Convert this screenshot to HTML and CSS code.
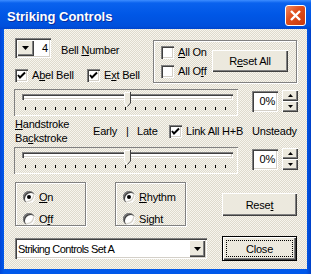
FILE: index.html
```html
<!DOCTYPE html>
<html lang="en">
<head>
  <meta charset="UTF-8" />
  <title>Striking Controls</title>
  <link rel="stylesheet" href="styles.css">
</head>
<body>
  <div class="window">
    <div class="titlebar">
      <span class="title">Striking Controls</span>
      <span class="close-x">
        <svg width="13" height="13" viewBox="0 0 13 13"><path d="M2 2 L11 11 M11 2 L2 11" stroke="#fff" stroke-width="2.4" fill="none"/></svg>
      </span>
    </div>

    <div class="client">
      <!-- bell number + all on/off -->
      <div class="top">
        <div class="top-left">
          <div class="bell-row">
            <div class="mini-combo">
              <span class="mini-btn"><svg width="7" height="4" viewBox="0 0 7 4"><polygon points="0,0 7,0 3.5,4" fill="#000"/></svg></span>
              <span class="mini-val">4</span>
            </div>
            <span class="bell-label">Bell <u>N</u>umber</span>
          </div>
          <div class="check-row">
            <div class="check check-wide">
              <span class="box"><svg width="13" height="13" viewBox="0 0 13 13"><polyline points="3,6 5,8.5 10,3.5" stroke="#000" stroke-width="2" fill="none"/></svg></span>
              A<u>b</u>el Bell
            </div>
            <div class="check">
              <span class="box"><svg width="13" height="13" viewBox="0 0 13 13"><polyline points="3,6 5,8.5 10,3.5" stroke="#000" stroke-width="2" fill="none"/></svg></span>
              E<u>x</u>t Bell
            </div>
          </div>
        </div>
        <div class="group all-group">
          <div class="all-checks">
            <div class="check"><span class="box"></span><u>A</u>ll On</div>
            <div class="check"><span class="box"></span>All O<u>f</u>f</div>
          </div>
          <div class="btn reset-all">R<u>e</u>set All</div>
        </div>
      </div>

      <!-- handstroke slider -->
      <div class="slider-row">
        <div class="slider">
          <div class="channel"></div>
          <div class="ticks"></div>
          <svg class="thumb" width="7" height="15" viewBox="0 0 7 15">
            <polygon points="0.5,0.5 6.5,0.5 6.5,11 3.5,14.5 0.5,11" fill="#ECE9DE"/>
            <polyline points="3,14 0.5,11 0.5,0.5 6,0.5" stroke="#fff" fill="none"/>
            <polyline points="6.5,0 6.5,11 3.5,14.5" stroke="#404040" fill="none"/>
          </svg>
        </div>
        <div class="pct">0%</div>
        <div class="spin">
          <span class="spin-btn"><svg width="5" height="3" viewBox="0 0 5 3"><polygon points="0,3 5,3 2.5,0" fill="#000"/></svg></span>
          <span class="spin-btn"><svg width="5" height="3" viewBox="0 0 5 3"><polygon points="0,0 5,0 2.5,3" fill="#000"/></svg></span>
        </div>
      </div>

      <div class="mid-row">
        <div class="hb">
          <div><u>H</u>andstroke</div>
          <div>Ba<u>c</u>kstroke</div>
        </div>
        <span class="early">Early</span>
        <span class="bar">|</span>
        <span class="late">Late</span>
        <div class="check link-check">
          <span class="box"><svg width="13" height="13" viewBox="0 0 13 13"><polyline points="3,6 5,8.5 10,3.5" stroke="#000" stroke-width="2" fill="none"/></svg></span>
          Link All H+B
        </div>
        <span>Unsteady</span>
      </div>

      <!-- unsteady slider -->
      <div class="slider-row second">
        <div class="slider">
          <div class="channel"></div>
          <div class="ticks"></div>
          <svg class="thumb" width="7" height="15" viewBox="0 0 7 15">
            <polygon points="0.5,0.5 6.5,0.5 6.5,11 3.5,14.5 0.5,11" fill="#ECE9DE"/>
            <polyline points="3,14 0.5,11 0.5,0.5 6,0.5" stroke="#fff" fill="none"/>
            <polyline points="6.5,0 6.5,11 3.5,14.5" stroke="#404040" fill="none"/>
          </svg>
        </div>
        <div class="pct">0%</div>
        <div class="spin">
          <span class="spin-btn"><svg width="5" height="3" viewBox="0 0 5 3"><polygon points="0,3 5,3 2.5,0" fill="#000"/></svg></span>
          <span class="spin-btn"><svg width="5" height="3" viewBox="0 0 5 3"><polygon points="0,0 5,0 2.5,3" fill="#000"/></svg></span>
        </div>
      </div>

      <!-- on/off, rhythm/sight -->
      <div class="radio-row">
        <div class="group radio-group">
          <div class="radio"><span class="dot on"></span><u>O</u>n</div>
          <div class="radio"><span class="dot"></span>O<u>f</u>f</div>
        </div>
        <div class="group radio-group second-group">
          <div class="radio"><span class="dot on"></span><u>R</u>hythm</div>
          <div class="radio"><span class="dot"></span>Sight</div>
        </div>
        <div class="btn reset">Rese<u>t</u></div>
      </div>

      <div class="bottom-row">
        <div class="combo">
          <span class="combo-text">Striking Controls Set A</span>
          <span class="combo-btn"><svg width="7" height="4" viewBox="0 0 7 4"><polygon points="0,0 7,0 3.5,4" fill="#000"/></svg></span>
        </div>
        <div class="btn close"><span class="focus">Close</span></div>
      </div>
    </div>
  </div>
</body>
</html>
```

FILE: styles.css
```css
body {
  margin: 0;
  font-family: "Liberation Sans", Arial, sans-serif;
  font-size: 11px;
  letter-spacing: -0.2px;
  color: #000;
}
.window {
  width: 311px;
  height: 274px;
  display: flex;
  flex-direction: column;
  background: linear-gradient(to right, #0046D8, #0058EA 4px, #0058EA 306px, #0040C8);
}
.titlebar {
  height: 29px;
  flex: none;
  display: flex;
  align-items: center;
  padding: 0 5px 0 7px;
  background: linear-gradient(#3D8DFF 0, #0A62EE 3px, #0057E6 50%, #0050DC 90%, #0046CE 100%);
}
.title {
  flex: 1;
  padding-top: 3px;
  color: #fff;
  font-weight: bold;
  font-size: 13px;
  letter-spacing: 0;
  text-shadow: 1px 1px #0A2E9E;
}
.close-x {
  width: 21px;
  height: 21px;
  box-sizing: border-box;
  border: 1px solid #fff;
  border-radius: 3px;
  background: linear-gradient(135deg, #F08B64, #E0501E 40%, #C8380C);
  display: flex;
  align-items: center;
  justify-content: center;
  margin-top: 2px;
}
.client {
  flex: 1;
  margin: 0 4px 5px;
  padding: 9px 0 0 11px;
  background-color: #ECE9DE;
  background-image: repeating-conic-gradient(#F7F5EE 0 25%, #DEDACD 0 50%);
  background-size: 2px 2px;
}

/* shared 3d bits */
.btn {
  box-sizing: border-box;
  display: flex;
  align-items: center;
  justify-content: center;
  background: #ECE9DE;
  box-shadow: inset 1px 1px #fff, inset -1px -1px #404040, inset -2px -2px #808080;
}
.group {
  box-sizing: border-box;
  border: 1px solid #808080;
  box-shadow: inset 1px 1px #fff, 1px 1px #fff;
}
.check {
  display: flex;
  align-items: center;
  line-height: 13px;
  white-space: nowrap;
}
.box {
  width: 13px;
  height: 13px;
  flex: none;
  box-sizing: border-box;
  margin-right: 4px;
  background: #fff;
  box-shadow: inset 1px 1px #808080, inset 2px 2px #404040, inset -1px -1px #fff, inset -2px -2px #D4D0C8;
}
.box svg {
  display: block;
}

/* top row */
.top {
  display: flex;
  height: 45px;
}
.top-left {
  width: 138px;
}
.bell-row {
  display: flex;
  height: 20px;
}
.mini-combo {
  width: 36px;
  height: 20px;
  box-sizing: border-box;
  padding: 2px;
  display: flex;
  background: #fff;
  box-shadow: inset 1px 1px #808080, inset 2px 2px #404040, inset -1px -1px #fff, inset -2px -2px #D4D0C8;
}
.mini-btn {
  width: 17px;
  height: 16px;
  display: flex;
  align-items: center;
  justify-content: center;
  background: #ECE9DE;
  box-shadow: inset 1px 1px #fff, inset -1px -1px #404040, inset -2px -2px #808080;
}
.mini-val {
  flex: 1;
  text-align: right;
  line-height: 16px;
  padding-right: 1px;
}
.bell-label {
  align-self: flex-end;
  margin: 0 0 1px 10px;
  line-height: 13px;
}
.check-row {
  display: flex;
  margin-top: 11px;
}
.check-wide {
  width: 72px;
}
.all-group {
  width: 144px;
  height: 43px;
  margin-top: 2px;
  padding: 5px 0 0 7px;
  display: flex;
  align-items: flex-start;
}
.all-checks {
  width: 51px;
  display: flex;
  flex-direction: column;
  gap: 6px;
}
.reset-all {
  width: 76px;
  height: 22px;
  margin-top: 4px;
}

/* sliders */
.slider-row {
  display: flex;
  align-items: flex-start;
  margin-top: 6px;
}
.slider-row.second {
  margin-top: 2px;
}
.slider {
  position: relative;
  width: 224px;
  height: 27px;
  margin-left: -1px;
  box-sizing: border-box;
  padding: 5px 5px 0 8px;
  box-shadow: inset 1px 1px #808080, inset -1px -1px #fff;
}
.channel {
  height: 6px;
  background: #fff;
  box-shadow: inset 1px 1px #808080, inset 2px 2px #404040, inset -1px -1px #fff, inset -2px -2px #D4D0C8;
}
.ticks {
  width: 201px;
  height: 3px;
  margin: 7px 0 0 3px;
  background: repeating-linear-gradient(to right, #000 0 1px, transparent 1px 10px);
}
.thumb {
  position: absolute;
  left: 110px;
  top: 3px;
}
.pct {
  width: 26px;
  height: 21px;
  margin: 2px 0 0 14px;
  box-sizing: border-box;
  padding-right: 3px;
  text-align: right;
  line-height: 21px;
  background: #fff;
  box-shadow: inset 1px 1px #808080, inset 2px 2px #404040, inset -1px -1px #fff, inset -2px -2px #D4D0C8;
}
.spin {
  width: 16px;
  height: 22px;
  margin: 1px 0 0 4px;
  display: flex;
  flex-direction: column;
}
.spin-btn {
  flex: 1;
  display: flex;
  align-items: center;
  justify-content: center;
  background: #ECE9DE;
  box-shadow: inset 1px 1px #fff, inset -1px -1px #404040, inset -2px -2px #808080;
}
.spin-btn svg {
  display: block;
}

/* middle labels */
.mid-row {
  display: flex;
  align-items: center;
  height: 28px;
  margin-top: 1px;
  white-space: nowrap;
}
.hb {
  width: 78px;
  line-height: 14px;
}
.early {
  width: 33px;
}
.bar {
  width: 11px;
}
.late {
  width: 32px;
}
.link-check {
  width: 83px;
}

/* radio groups */
.radio-row {
  display: flex;
  align-items: flex-start;
  margin-top: 8px;
}
.radio-group {
  width: 71px;
  height: 44px;
  padding: 8px 0 0 7px;
  display: flex;
  flex-direction: column;
  gap: 10px;
}
.second-group {
  margin-left: 29px;
}
.radio {
  display: flex;
  align-items: center;
  line-height: 12px;
}
.dot {
  width: 12px;
  height: 12px;
  flex: none;
  margin-right: 4px;
  border-radius: 50%;
  background: #fff;
  box-shadow: inset 1px 1px #808080, inset 2px 2px #404040, inset -1px -1px #fff, inset -2px -2px #D4D0C8;
  display: flex;
  align-items: center;
  justify-content: center;
}
.dot.on::after {
  content: "";
  width: 4px;
  height: 4px;
  border-radius: 50%;
  background: #000;
}
.reset {
  width: 75px;
  height: 23px;
  margin: 11px 0 0 36px;
}

/* bottom */
.bottom-row {
  display: flex;
  align-items: center;
  margin-top: 10px;
}
.combo {
  width: 192px;
  height: 21px;
  box-sizing: border-box;
  padding: 2px;
  display: flex;
  align-items: center;
  background: #fff;
  box-shadow: inset 1px 1px #808080, inset 2px 2px #404040, inset -1px -1px #fff, inset -2px -2px #D4D0C8;
}
.combo-text {
  flex: 1;
  padding-left: 1px;
  letter-spacing: -0.6px;
}
.combo-btn {
  width: 16px;
  height: 17px;
  display: flex;
  align-items: center;
  justify-content: center;
  background: #ECE9DE;
  box-shadow: inset 1px 1px #fff, inset -1px -1px #404040, inset -2px -2px #808080;
}
.close {
  width: 75px;
  height: 25px;
  margin-left: 15px;
  border: 1px solid #000;
  padding: 3px;
}
.focus {
  flex: 1;
  align-self: stretch;
  display: flex;
  align-items: center;
  justify-content: center;
  border: 1px dotted #000;
}
```
